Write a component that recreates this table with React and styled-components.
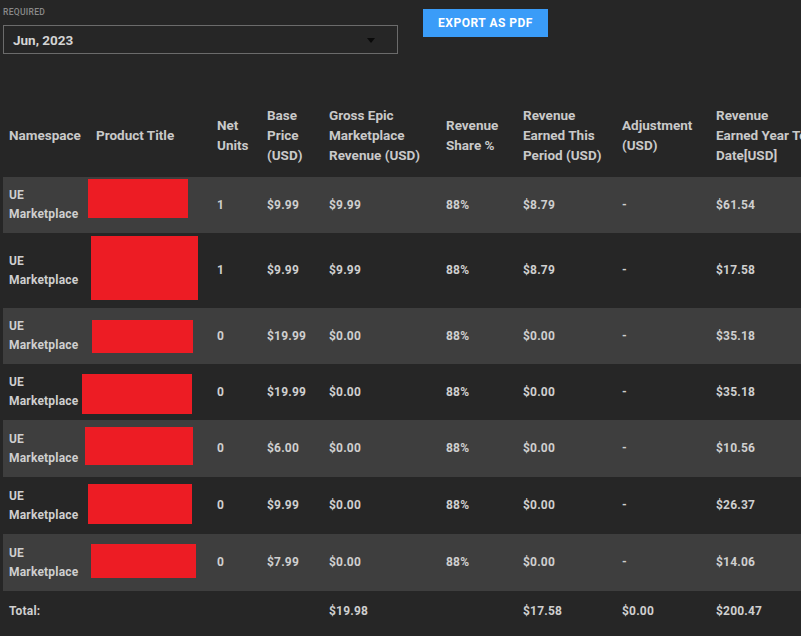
import React from "react";
import styled, { createGlobalStyle } from "styled-components";

const GlobalStyle = createGlobalStyle`
  html, body {
    margin: 0;
    padding: 0;
    background: #262626;
    overflow: hidden;
  }
  body {
    font-family: Roboto, "Liberation Sans", sans-serif;
    color: #cfcfcf;
  }
`;

const Page = styled.div`
  width: 801px;
  height: 636px;
  padding: 0 0 0 3px;
  box-sizing: border-box;
  overflow: hidden;
`;

const TopBar = styled.div`
  display: flex;
  align-items: flex-start;
  gap: 25px;
  height: 97px;
`;

const Field = styled.div`
  display: flex;
  flex-direction: column;
  padding-top: 7px;
  width: 395px;
`;

const Label = styled.div`
  font-size: 8.5px;
  font-weight: 500;
  color: #8a8a8a;
  letter-spacing: 0.3px;
  line-height: 10px;
  height: 10px;
  margin-bottom: 8px;
`;

const Select = styled.div`
  display: flex;
  align-items: center;
  justify-content: space-between;
  height: 29px;
  box-sizing: border-box;
  border: 1px solid #6b6b6b;
  padding: 0 22px 0 9px;
  font-size: 13.5px;
  font-weight: 700;
  color: #d4d4d4;
`;

const Caret = styled.span`
  width: 0;
  height: 0;
  border-left: 4.5px solid transparent;
  border-right: 4.5px solid transparent;
  border-top: 5px solid #0a0a0a;
  margin-top: 2px;
`;

const ExportButton = styled.button`
  margin-top: 9px;
  width: 125px;
  height: 28px;
  border: none;
  background: #3a9cf8;
  color: #ffffff;
  font-family: Roboto, "Liberation Sans", sans-serif;
  font-weight: 700;
  font-size: 12px;
  letter-spacing: 0.5px;
  padding: 0;
`;

const Table = styled.table`
  border-collapse: collapse;
  table-layout: fixed;
  width: 840px;
  font-size: 12px;
  font-weight: 700;
`;

const HeadCell = styled.th`
  text-align: left;
  vertical-align: middle;
  padding: 8px 6px 12px;
  font-size: 13.5px;
  line-height: 20px;
  white-space: nowrap;
  font-weight: 700;
  color: #c9c9c9;
  height: 60px;
  overflow: hidden;
`;

const Row = styled.tr`
  background: ${(p) => (p.$striped ? "#3e3e3e" : "transparent")};
  height: ${(p) => p.$h}px;
`;

const Cell = styled.td`
  vertical-align: middle;
  padding: 0 6px;
  line-height: 19px;
  letter-spacing: 0.2px;
  white-space: nowrap;
  color: #cfcfcf;
  overflow: ${(p) => (p.$product ? "visible" : "hidden")};
  position: ${(p) => (p.$product ? "relative" : "static")};
`;

const Redaction = styled.div`
  position: absolute;
  background: #ed1c24;
`;

const cols = [87, 121, 50, 62, 117, 77, 99, 94, 133];

const headers = [
  ["Namespace"],
  ["Product Title"],
  ["Net", "Units"],
  ["Base", "Price", "(USD)"],
  ["Gross Epic", "Marketplace", "Revenue (USD)"],
  ["Revenue", "Share %"],
  ["Revenue", "Earned This", "Period (USD)"],
  ["Adjustment", "(USD)"],
  ["Revenue", "Earned Year To", "Date[USD]"],
];

const rows = [
  { h: 56, units: "1", base: "$9.99", gross: "$9.99", earned: "$8.79", ytd: "$61.54", red: [-2, 2, 100, 39] },
  { h: 75, units: "1", base: "$9.99", gross: "$9.99", earned: "$8.79", ytd: "$17.58", red: [1, 3, 107, 64] },
  { h: 56, units: "0", base: "$19.99", gross: "$0.00", earned: "$0.00", ytd: "$35.18", red: [2, 12, 101, 33] },
  { h: 56, units: "0", base: "$19.99", gross: "$0.00", earned: "$0.00", ytd: "$35.18", red: [-8, 10, 110, 40] },
  { h: 57, units: "0", base: "$6.00", gross: "$0.00", earned: "$0.00", ytd: "$10.56", red: [-5, 7, 108, 38] },
  { h: 57, units: "0", base: "$9.99", gross: "$0.00", earned: "$0.00", ytd: "$26.37", red: [-2, 7, 104, 40] },
  { h: 57, units: "0", base: "$7.99", gross: "$0.00", earned: "$0.00", ytd: "$14.06", red: [1, 10, 105, 34] },
];

export default function App() {
  return (
    <>
      <GlobalStyle />
      <Page>
        <TopBar>
          <Field>
            <Label>REQUIRED</Label>
            <Select>
              <span>Jun, 2023</span>
              <Caret />
            </Select>
          </Field>
          <ExportButton>EXPORT AS PDF</ExportButton>
        </TopBar>
        <Table>
          <colgroup>
            {cols.map((w, i) => (
              <col key={i} style={{ width: w }} />
            ))}
          </colgroup>
          <thead>
            <tr>
              {headers.map((lines, i) => (
                <HeadCell key={i}>
                  {lines.map((l, j) => (
                    <React.Fragment key={j}>
                      {j > 0 && <br />}
                      {l}
                    </React.Fragment>
                  ))}
                </HeadCell>
              ))}
            </tr>
          </thead>
          <tbody>
            {rows.map((r, i) => (
              <Row key={i} $striped={i % 2 === 0} $h={r.h}>
                <Cell>
                  UE
                  <br />
                  Marketplace
                </Cell>
                <Cell $product>
                  <Redaction
                    style={{ left: r.red[0], top: r.red[1], width: r.red[2], height: r.red[3] }}
                  />
                </Cell>
                <Cell>{r.units}</Cell>
                <Cell>{r.base}</Cell>
                <Cell>{r.gross}</Cell>
                <Cell>88%</Cell>
                <Cell>{r.earned}</Cell>
                <Cell>-</Cell>
                <Cell>{r.ytd}</Cell>
              </Row>
            ))}
            <Row $h={40}>
              <Cell>Total:</Cell>
              <Cell />
              <Cell />
              <Cell />
              <Cell>$19.98</Cell>
              <Cell />
              <Cell>$17.58</Cell>
              <Cell>$0.00</Cell>
              <Cell>$200.47</Cell>
            </Row>
          </tbody>
        </Table>
      </Page>
    </>
  );
}
